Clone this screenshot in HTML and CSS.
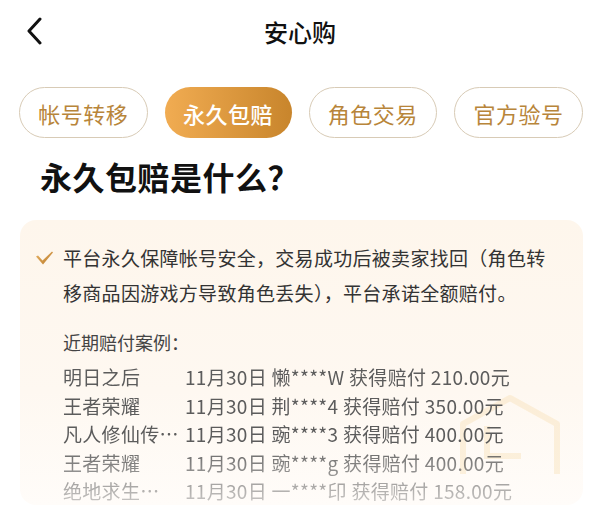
FILE: index.html
```html
<!DOCTYPE html>
<html lang="zh-CN">
<head>
  <meta charset="UTF-8">
  <title>安心购</title>
  <link rel="stylesheet" href="styles.css">
</head>
<body>
  <!-- Шапка -->
  <header class="topbar">
    <a class="back" href="#">
      <svg width="18" height="28" viewBox="0 0 18 28"><path d="M15 2 L4 14 L15 26" fill="none" stroke="#111" stroke-width="3" stroke-linecap="round" stroke-linejoin="round"/></svg>
    </a>
    <h1 class="topbar-title">安心购</h1>
    <span></span>
  </header>

  <!-- Вкладки -->
  <nav class="tabs">
    <a class="tab" href="#">帐号转移</a>
    <a class="tab active" href="#">永久包赔</a>
    <a class="tab" href="#">角色交易</a>
    <a class="tab" href="#">官方验号</a>
  </nav>

  <h2 class="section-title">永久包赔是什么？</h2>

  <section class="card">
    <svg class="watermark" width="110" height="90" viewBox="0 0 110 90">
      <path d="M8 82 L8 32 L55 6 L102 32 L102 82" fill="none" stroke="#f6d79f" stroke-width="6" stroke-linejoin="round"/>
      <path d="M32 34 L32 64 L66 64" fill="none" stroke="#f6d79f" stroke-width="6"/>
    </svg>

    <div class="point">
      <svg class="check" width="19" height="14" viewBox="0 0 18 14">
        <defs>
          <linearGradient id="g" x1="0" y1="0" x2="1" y2="1">
            <stop offset="0" stop-color="#e9b465"/>
            <stop offset="1" stop-color="#b97a2a"/>
          </linearGradient>
        </defs>
        <path d="M0.5 5.5 L2.5 4.5 L7 9.5 L16.5 0.5 L17.5 1.5 L7.5 13.5 Z" fill="url(#g)"/>
      </svg>
      <p>平台永久保障帐号安全，交易成功后被卖家找回（角色转移商品因游戏方导致角色丢失），平台承诺全额赔付。</p>
    </div>

    <div class="cases">
      <h3>近期赔付案例：</h3>
      <ul class="case-list">
        <li><span class="game">明日之后</span><span>11月30日 懒****W 获得赔付 210.00元</span></li>
        <li><span class="game">王者荣耀</span><span>11月30日 荆****4 获得赔付 350.00元</span></li>
        <li><span class="game">凡人修仙传…</span><span>11月30日 豌****3 获得赔付 400.00元</span></li>
        <li><span class="game">王者荣耀</span><span>11月30日 豌****g 获得赔付 400.00元</span></li>
        <li><span class="game">绝地求生…</span><span>11月30日 一****印 获得赔付 158.00元</span></li>
      </ul>
    </div>
  </section>
</body>
</html>
```

FILE: styles.css
```css
/* Базовые сбросы */
* {
  margin: 0;
  padding: 0;
  box-sizing: border-box;
}

body {
  font-family: "Noto Sans CJK SC", "Noto Sans", sans-serif;
  color: #222;
  background: #fff;
  width: 600px;
  height: 527px;
  overflow: hidden;
}

a {
  color: inherit;
  text-decoration: none;
}

/* Шапка */
.topbar {
  height: 62px;
  display: grid;
  grid-template-columns: 1fr auto 1fr;
  align-items: center;
}

.back {
  display: flex;
  padding-left: 25px;
}

.topbar-title {
  font-size: 24px;
  font-weight: 500;
  color: #111;
}

/* Вкладки */
.tabs {
  display: flex;
  gap: 17px;
  margin-top: 25px;
  padding: 0 17px 0 19px;
}

.tab {
  flex: 1;
  height: 51px;
  border: 1px solid #d8cbb6;
  border-radius: 26px;
  display: flex;
  align-items: center;
  justify-content: center;
  font-size: 22px;
  color: #b8853a;
  letter-spacing: 0.5px;
}

.tab.active {
  border: none;
  background: linear-gradient(90deg, #f1ac52, #c8852c);
  color: #fff;
  font-weight: 500;
}

.section-title {
  margin-top: 19px;
  padding-left: 40px;
  font-size: 32px;
  line-height: 38px;
  font-weight: 700;
  color: #111;
  letter-spacing: 0.5px;
}

/* Карточка */
.card {
  position: relative;
  margin: 25px 17px 0 20px;
  height: 285px;
  padding: 20px 0 0 15px;
  border-radius: 16px;
  background: linear-gradient(180deg, #fef6ec 0%, #fef8f1 60%, #fffcf9 100%);
  overflow: hidden;
}

.watermark {
  position: absolute;
  left: 435px;
  top: 172px;
  opacity: 0.3;
}

.point {
  display: flex;
  gap: 9px;
}

.check {
  margin-top: 11px;
  flex: none;
}

.point p {
  width: 495px;
  font-size: 19px;
  line-height: 35px;
  letter-spacing: 0.3px;
  color: #333;
}

.cases {
  position: relative;
  padding-left: 28px;
  margin-top: 17px;
}

.cases h3 {
  font-size: 18px;
  font-weight: 400;
  line-height: 30px;
  color: #444;
  margin-bottom: 6px;
}

.case-list {
  list-style: none;
  font-size: 19px;
  line-height: 28.5px;
  letter-spacing: 0.3px;
  color: #5c5c5c;
  -webkit-mask-image: linear-gradient(180deg, #000 55%, rgba(0, 0, 0, 0.3) 100%);
  mask-image: linear-gradient(180deg, #000 55%, rgba(0, 0, 0, 0.3) 100%);
}

.case-list li {
  display: flex;
  white-space: nowrap;
}

.game {
  width: 122px;
}
```
